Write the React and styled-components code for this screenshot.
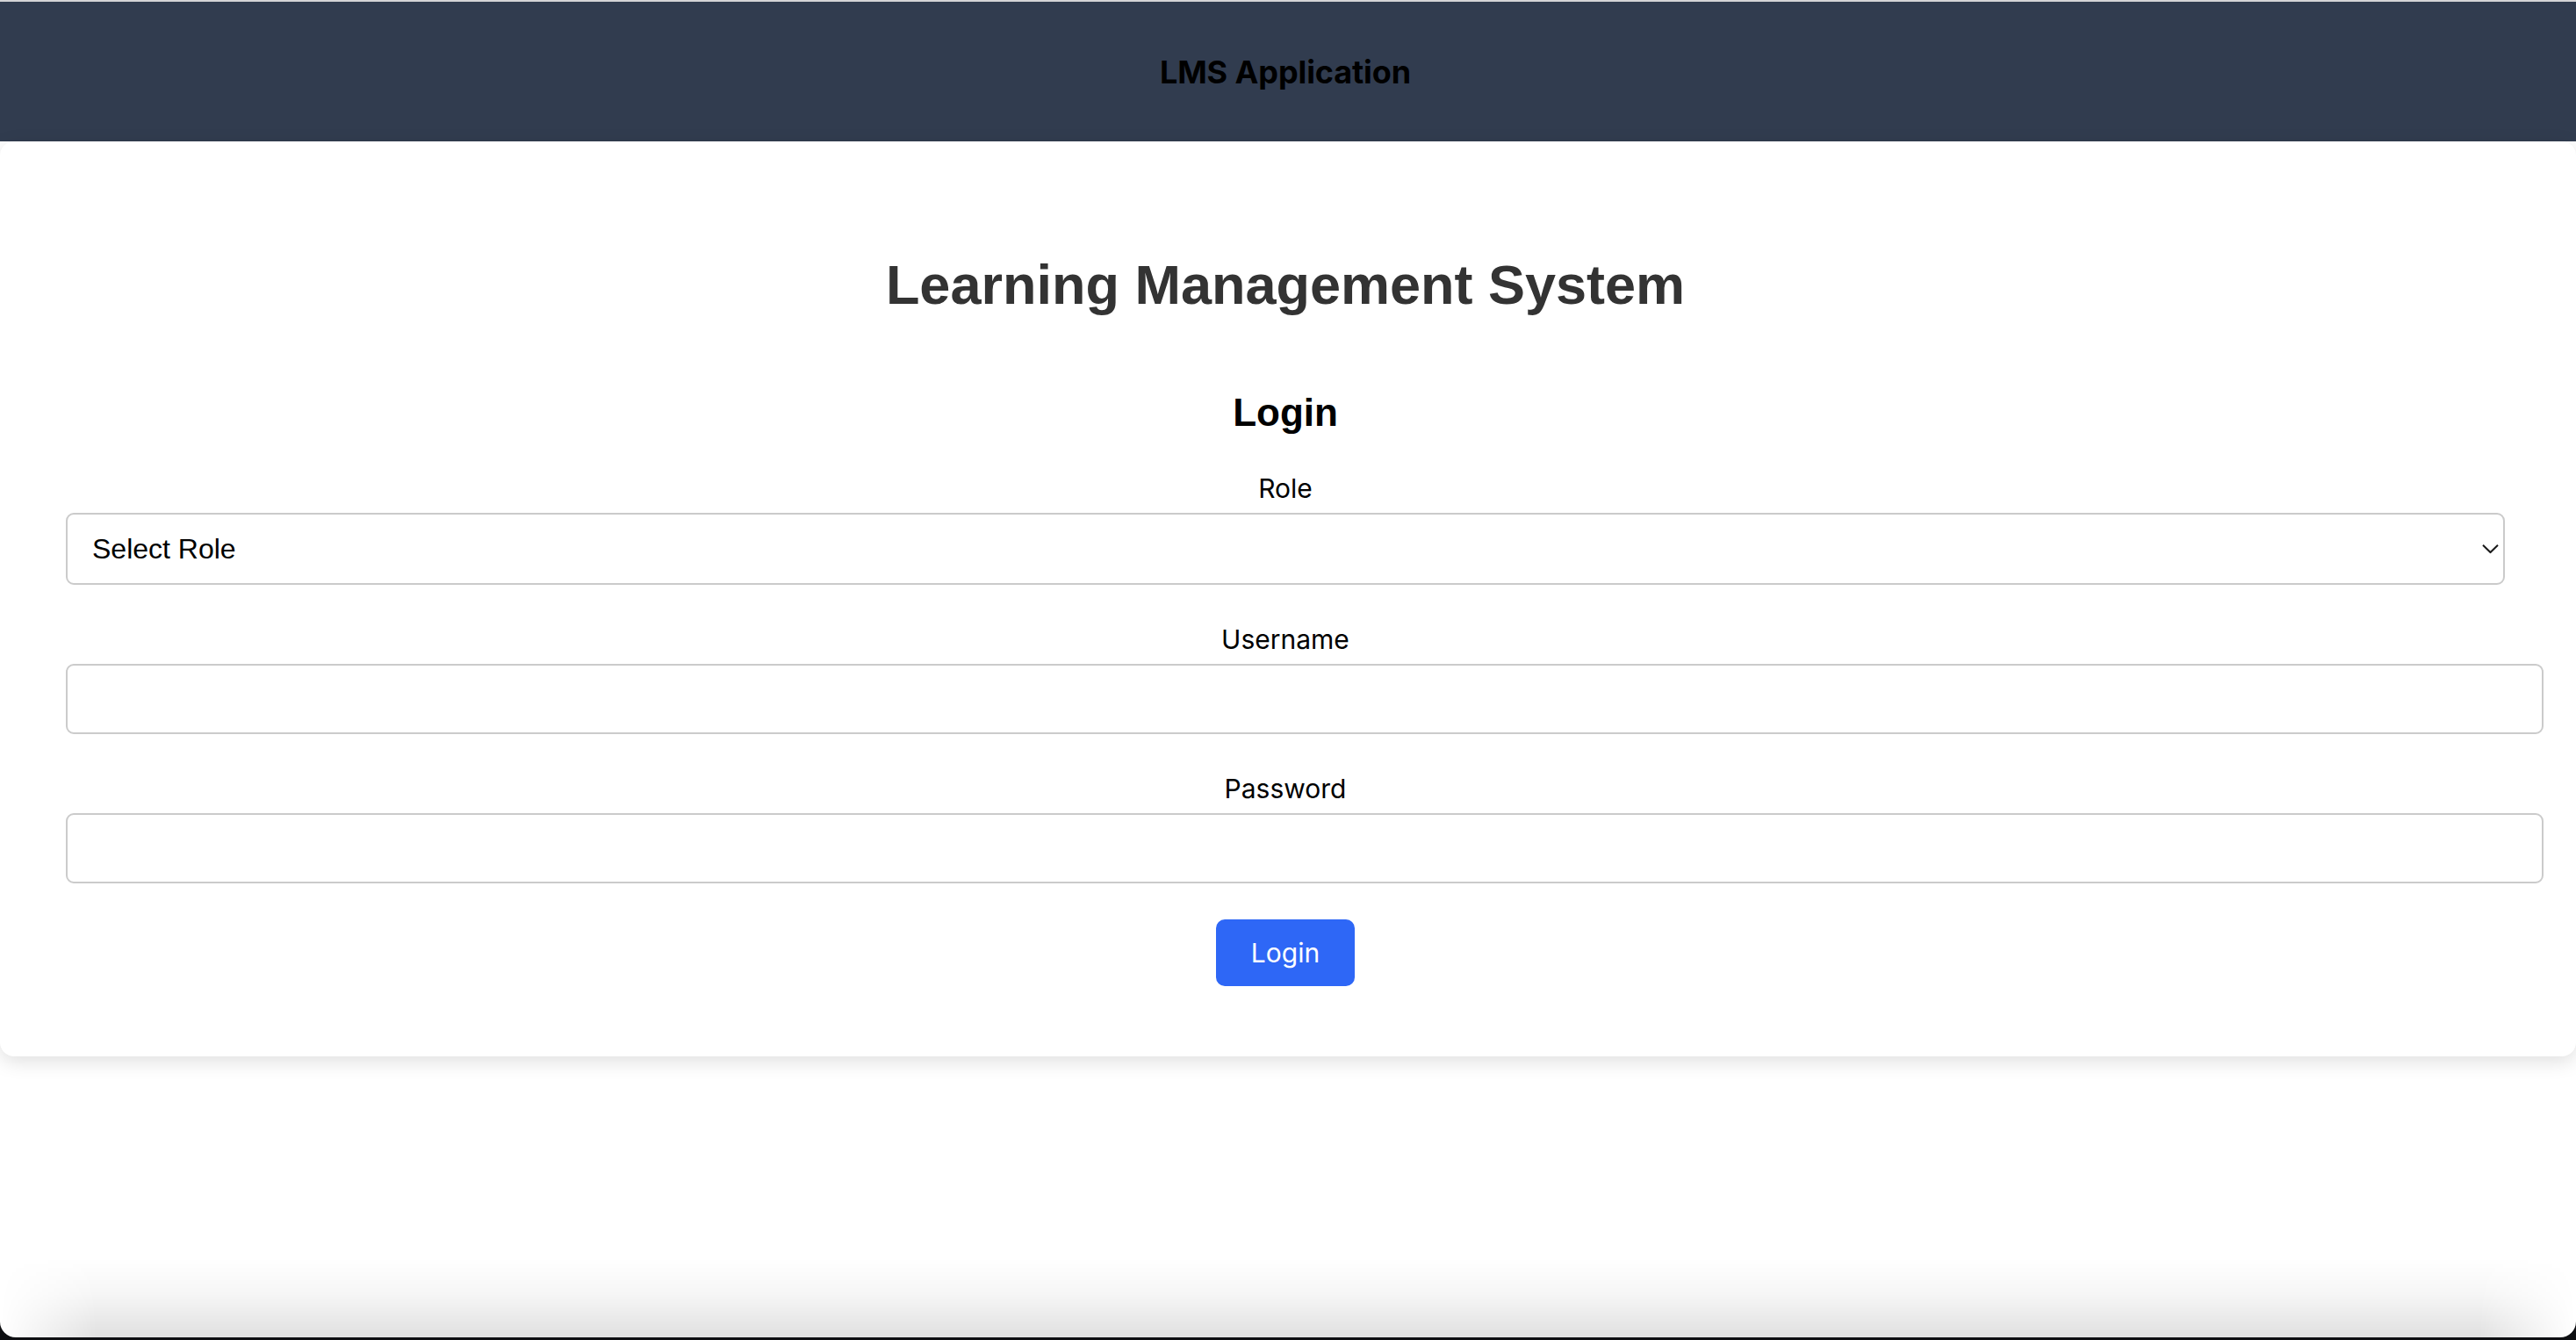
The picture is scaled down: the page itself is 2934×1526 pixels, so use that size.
import React from "react";
import styled, { createGlobalStyle } from "styled-components";

const GlobalStyle = createGlobalStyle`
  html, body { margin: 0; padding: 0; }
  body { background: #0e0f12; font-family: "Liberation Sans", Arial, sans-serif; }
  * { box-sizing: border-box; }
`;

const Desktop = styled.div`
  min-height: 100vh;
  display: flex;
  flex-direction: column;
  background: #0e0f12;
`;

const Window = styled.div`
  flex: 1;
  display: flex;
  flex-direction: column;
  background: #ffffff;
  border-top: 2px solid #d4d4d6;
  border-radius: 0 0 18px 18px;
  margin-bottom: 3px;
  overflow: hidden;
`;

const Header = styled.header`
  height: 159px;
  background: #313c4f;
  display: flex;
  align-items: center;
  justify-content: center;
  padding: 0 81px 0 75px;
`;

const HeaderTitle = styled.div`
  font-family: Inter, "Noto Sans", sans-serif;
  font-weight: 700;
  font-size: 36px;
  color: #000;
  letter-spacing: -0.1px;
`;

const Card = styled.main`
  background: #ffffff;
  border-radius: 16px;
  box-shadow: 0 6px 22px rgba(0, 0, 0, 0.13);
  padding: 127px 81px 80px 75px;
  display: flex;
  flex-direction: column;
  align-items: stretch;
  position: relative;
  z-index: 1;
`;

const Title = styled.h1`
  margin: 0 0 85px;
  text-align: center;
  font-family: "Liberation Sans", Arial, sans-serif;
  font-weight: 700;
  font-size: 63px;
  line-height: 72px;
  color: #333333;
`;

const Subtitle = styled.h2`
  margin: 0 0 45px;
  text-align: center;
  font-family: "Liberation Sans", Arial, sans-serif;
  font-weight: 700;
  font-size: 44px;
  line-height: 49px;
  color: #000;
`;

const Form = styled.form`
  display: flex;
  flex-direction: column;
  gap: 45px;
`;

const Field = styled.div`
  display: flex;
  flex-direction: column;
  align-items: stretch;
`;

const Label = styled.label`
  display: block;
  text-align: center;
  font-family: Inter, "Noto Sans", sans-serif;
  font-size: 30px;
  line-height: 34px;
  color: #000;
  margin-bottom: 11px;
`;

const SelectWrap = styled.div`
  position: relative;
  width: 100%;
`;

const Select = styled.select`
  appearance: none;
  -webkit-appearance: none;
  width: 100%;
  height: 82px;
  border: 2px solid #cbcbcb;
  border-radius: 9px;
  background: #fff;
  padding: 0 40px 0 28px;
  font-family: "Liberation Sans", Arial, sans-serif;
  font-size: 32px;
  color: #000;
  outline: none;
`;

const Chevron = styled.svg`
  position: absolute;
  right: 7px;
  top: 50%;
  transform: translateY(-50%);
  width: 19px;
  height: 11px;
  pointer-events: none;
`;

const Input = styled.input`
  box-sizing: content-box;
  width: 100%;
  height: 76px;
  padding: 0 20px;
  border: 2px solid #cbcbcb;
  border-radius: 9px;
  background: #fff;
  font-family: "Liberation Sans", Arial, sans-serif;
  font-size: 32px;
  outline: none;
`;

const Actions = styled.div`
  display: flex;
  justify-content: center;
  margin-top: -4px;
`;

const Button = styled.button`
  width: 158px;
  height: 76px;
  border: none;
  border-radius: 10px;
  background: #2e67f6;
  color: #fff;
  font-family: Inter, "Noto Sans", sans-serif;
  font-size: 30px;
  font-weight: 400;
  cursor: pointer;
`;

const Spacer = styled.div`
  flex: 1;
`;

const BottomShade = styled.div`
  height: 90px;
  background: linear-gradient(to bottom, rgba(0, 0, 0, 0), rgba(0, 0, 0, 0.035) 45%, rgba(0, 0, 0, 0.12));
  -webkit-mask-image: linear-gradient(to right, transparent, #000 110px, #000 calc(100% - 110px), transparent);
  mask-image: linear-gradient(to right, transparent, #000 110px, #000 calc(100% - 110px), transparent);
`;

export default function App() {
  return (
    <>
      <GlobalStyle />
      <Desktop>
        <Window>
          <Header>
            <HeaderTitle>LMS Application</HeaderTitle>
          </Header>
          <Card>
            <Title>Learning Management System</Title>
            <Subtitle>Login</Subtitle>
            <Form onSubmit={(e) => e.preventDefault()}>
              <Field>
                <Label htmlFor="role">Role</Label>
                <SelectWrap>
                  <Select id="role" defaultValue="">
                    <option value="">Select Role</option>
                    <option value="student">Student</option>
                    <option value="instructor">Instructor</option>
                    <option value="admin">Admin</option>
                  </Select>
                  <Chevron viewBox="0 0 19 11" fill="none">
                    <path d="M1 1.2 L9.5 9.5 L18 1.2" stroke="#1a1a1a" strokeWidth="2" />
                  </Chevron>
                </SelectWrap>
              </Field>
              <Field>
                <Label htmlFor="username">Username</Label>
                <Input id="username" type="text" />
              </Field>
              <Field>
                <Label htmlFor="password">Password</Label>
                <Input id="password" type="password" />
              </Field>
              <Actions>
                <Button type="submit">Login</Button>
              </Actions>
            </Form>
          </Card>
          <Spacer />
          <BottomShade />
        </Window>
      </Desktop>
    </>
  );
}
